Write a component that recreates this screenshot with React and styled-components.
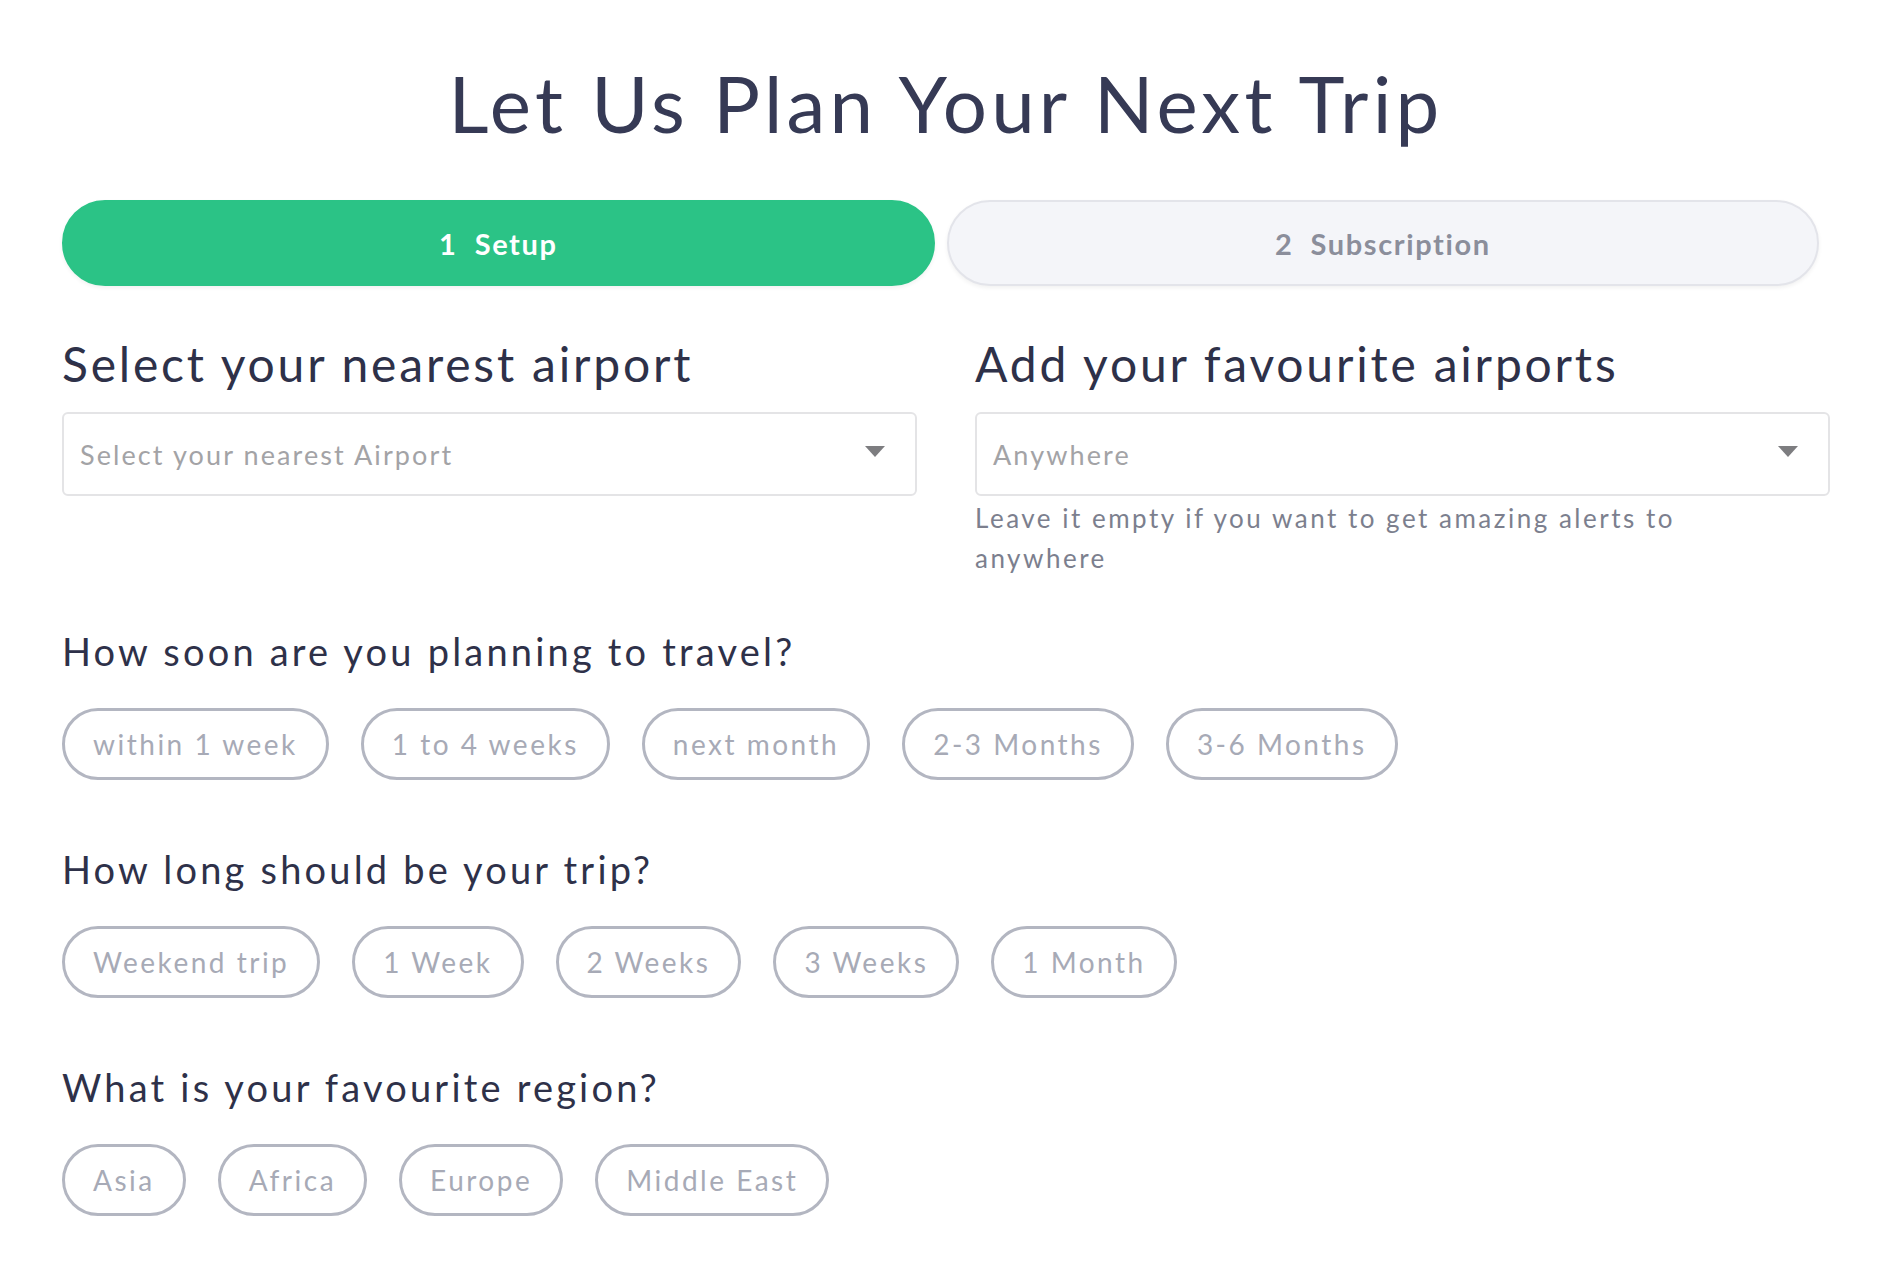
import React from "react";
import styled, { createGlobalStyle } from "styled-components";

const GlobalStyle = createGlobalStyle`
  body {
    margin: 0;
    background: #ffffff;
    font-family: "Lato", "Open Sans", sans-serif;
    color: #2e3149;
  }
`;

const soonOptions = ["within 1 week", "1 to 4 weeks", "next month", "2-3 Months", "3-6 Months"];
const lengthOptions = ["Weekend trip", "1 Week", "2 Weeks", "3 Weeks", "1 Month"];
const regionOptions = ["Asia", "Africa", "Europe", "Middle East"];

export default function App() {
  return (
    <>
      <GlobalStyle />
      <Page>
        <Title>Let Us Plan Your Next Trip</Title>

        <Steps>
          <Step active>1&nbsp; Setup</Step>
          <Step>2&nbsp; Subscription</Step>
        </Steps>

        <AirportRow>
          <Field>
            <FieldTitle>Select your nearest airport</FieldTitle>
            <Select>
              <span>Select your nearest Airport</span>
              <Caret />
            </Select>
          </Field>
          <Field>
            <FieldTitle>Add your favourite airports</FieldTitle>
            <Select>
              <span>Anywhere</span>
              <Caret />
            </Select>
            <Hint>Leave it empty if you want to get amazing alerts to anywhere</Hint>
          </Field>
        </AirportRow>

        <Question>
          <QuestionTitle>How soon are you planning to travel?</QuestionTitle>
          <Chips>
            {soonOptions.map((o) => (
              <Chip key={o}>{o}</Chip>
            ))}
          </Chips>
        </Question>

        <Question>
          <QuestionTitle>How long should be your trip?</QuestionTitle>
          <Chips>
            {lengthOptions.map((o) => (
              <Chip key={o}>{o}</Chip>
            ))}
          </Chips>
        </Question>

        <Question>
          <QuestionTitle>What is your favourite region?</QuestionTitle>
          <Chips>
            {regionOptions.map((o) => (
              <Chip key={o}>{o}</Chip>
            ))}
          </Chips>
        </Question>
      </Page>
    </>
  );
}

const Page = styled.div`
  padding: 64px 48px 40px 62px;
`;

const Title = styled.h1`
  margin: 0;
  text-align: center;
  font-size: 78px;
  line-height: 78px;
  font-weight: 400;
  color: #363a55;
  letter-spacing: 4.2px;
`;

const Steps = styled.div`
  display: grid;
  grid-template-columns: 1fr 1fr;
  gap: 12px;
  margin: 58px 11px 0 0;
`;

const Step = styled.div`
  height: 86px;
  box-sizing: border-box;
  border-radius: 43px;
  display: flex;
  align-items: center;
  justify-content: center;
  font-size: 29px;
  font-weight: 700;
  letter-spacing: 1.6px;
  background: ${(p) => (p.active ? "#2bc386" : "#f4f5f9")};
  color: ${(p) => (p.active ? "#ffffff" : "#8b8e9b")};
  border: 2px solid ${(p) => (p.active ? "#2bc386" : "#e3e4ea")};
  box-shadow: 0 2px 4px rgba(0, 0, 0, 0.06);
`;

const AirportRow = styled.div`
  display: grid;
  grid-template-columns: 1fr 1fr;
  column-gap: 58px;
  margin-top: 54px;
`;

const Field = styled.div`
  display: flex;
  flex-direction: column;
`;

const FieldTitle = styled.h2`
  margin: 0 0 24px;
  font-size: 48px;
  line-height: 48px;
  font-weight: 400;
  color: #2e3149;
  letter-spacing: 2.8px;
`;

const Select = styled.div`
  height: 84px;
  box-sizing: border-box;
  border: 2px solid #e4e4e6;
  border-radius: 6px;
  padding: 0 30px 0 16px;
  display: flex;
  align-items: center;
  justify-content: space-between;
  font-size: 27px;
  color: #a3a3a6;
  letter-spacing: 2.1px;
`;

const Caret = styled.span`
  width: 0;
  height: 0;
  margin-top: -6px;
  border-left: 10px solid transparent;
  border-right: 10px solid transparent;
  border-top: 11px solid #7d7d80;
`;

const Hint = styled.p`
  margin: 2px 0 0;
  max-width: 770px;
  font-size: 26px;
  line-height: 40px;
  color: #7c7f8e;
  letter-spacing: 2.5px;
`;

const Question = styled.section`
  margin-top: 54px;

  & + & {
    margin-top: 70px;
  }
`;

const QuestionTitle = styled.h3`
  margin: 0 0 38px;
  font-size: 38px;
  line-height: 38px;
  font-weight: 400;
  color: #2e3149;
  letter-spacing: 3.2px;
`;

const Chips = styled.div`
  display: flex;
  flex-wrap: wrap;
  gap: 32px;
`;

const Chip = styled.button`
  height: 72px;
  box-sizing: border-box;
  padding: 0 28px;
  border: 3px solid #b3b6c1;
  border-radius: 36px;
  background: #ffffff;
  font-family: inherit;
  font-size: 28px;
  color: #a7aab6;
  letter-spacing: 2.5px;
  cursor: pointer;
`;
